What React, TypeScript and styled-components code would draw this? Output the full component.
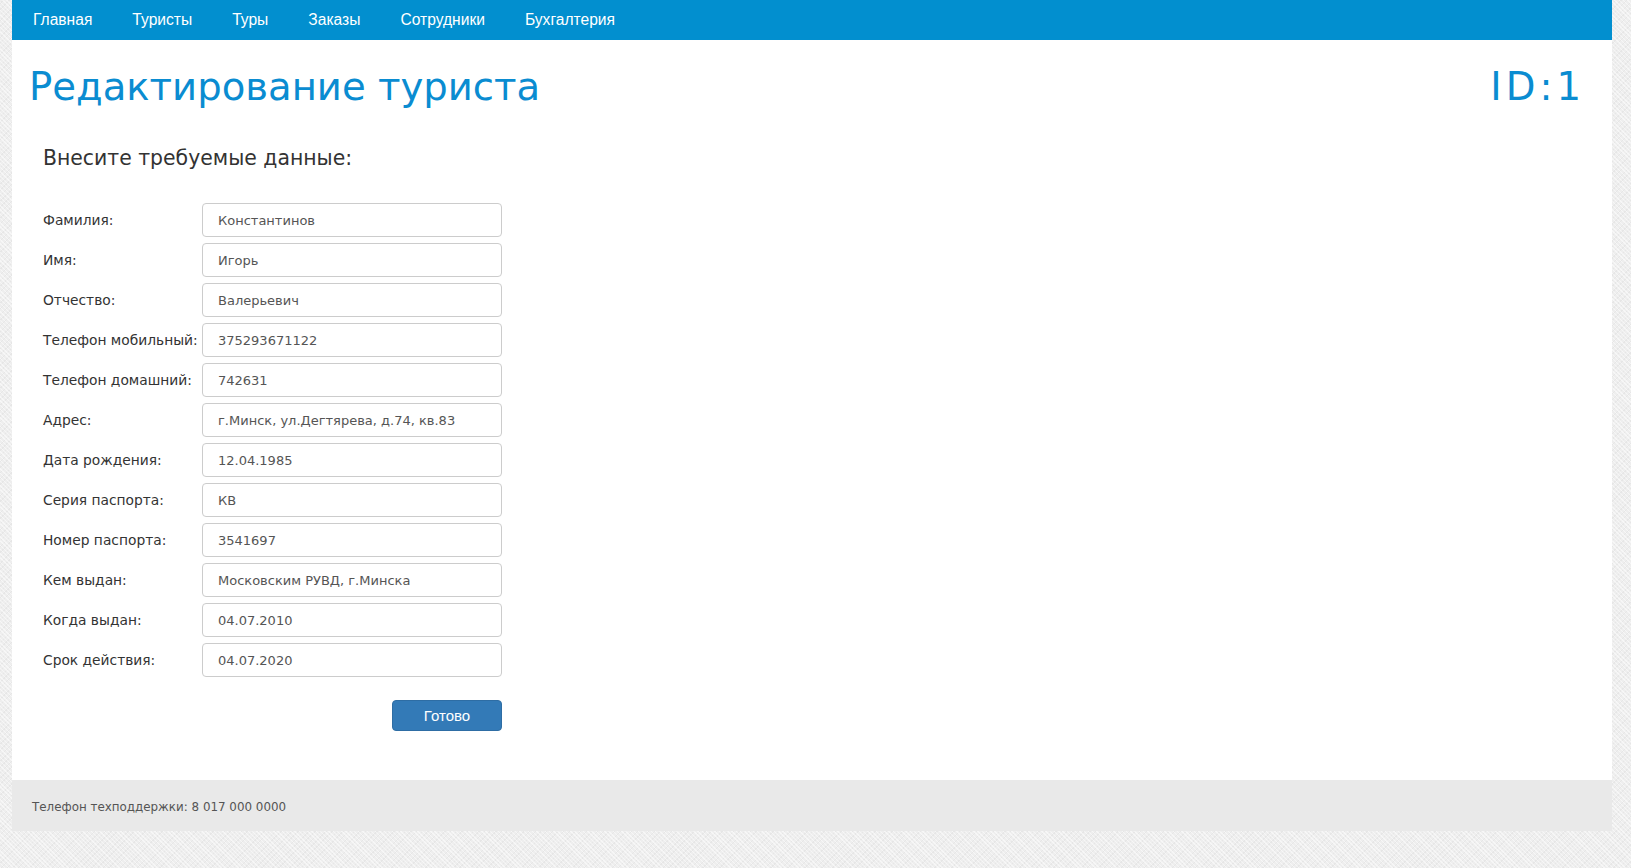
import React from "react";
import styled, { createGlobalStyle } from "styled-components";

const GlobalStyle = createGlobalStyle`
  html, body {
    margin: 0;
    padding: 0;
  }
  body {
    min-height: 868px;
    background-color: #eeeeee;
    background-image:
      repeating-linear-gradient(45deg, rgba(255,255,255,0.5) 0px, rgba(255,255,255,0.5) 1px, transparent 1px, transparent 3px),
      repeating-linear-gradient(-45deg, rgba(0,0,0,0.035) 0px, rgba(0,0,0,0.035) 1px, transparent 1px, transparent 4px);
    font-family: "DejaVu Sans", Verdana, sans-serif;
  }
`;

const Page = styled.div`
  width: 1600px;
  margin-left: 12px;
`;

const Nav = styled.nav`
  display: flex;
  height: 40px;
  background: #028fcf;
  padding-left: 1px;
`;

const NavItem = styled.a`
  padding: 0 20px;
  line-height: 39px;
  color: #ffffff;
  font-family: "Liberation Sans", Arial, sans-serif;
  font-size: 15.6px;
  text-decoration: none;
`;

const Panel = styled.main`
  background: #ffffff;
  padding: 23px 31px 49px 17px;
`;

const Header = styled.div`
  display: flex;
  justify-content: space-between;
  align-items: flex-start;
`;

const Title = styled.h1`
  margin: 0;
  font-weight: normal;
  font-size: 38.6px;
  line-height: 48px;
  color: #0a8cd1;
`;

const IdTitle = styled(Title)`
  letter-spacing: 4px;
  margin-right: -4px;
`;

const Form = styled.form`
  padding-left: 14px;
  width: 471px;
  margin-top: 35px;
`;

const Subtitle = styled.h2`
  margin: 0 0 33px;
  font-weight: normal;
  font-size: 20.4px;
  line-height: 24px;
  color: #333333;
`;

const Rows = styled.div`
  display: flex;
  flex-direction: column;
  gap: 6px;
`;

const Row = styled.label`
  display: grid;
  grid-template-columns: 159px 300px;
  align-items: center;
`;

const Label = styled.span`
  font-size: 13.8px;
  color: #333333;
  white-space: nowrap;
`;

const Input = styled.input`
  box-sizing: border-box;
  width: 300px;
  height: 34px;
  padding: 0 15px;
  border: 1px solid #cccccc;
  border-radius: 4px;
  font-family: "DejaVu Sans", Verdana, sans-serif;
  font-size: 13px;
  color: #555555;
  background: #ffffff;
  outline: none;
`;

const Actions = styled.div`
  display: flex;
  justify-content: flex-end;
  width: 459px;
  margin-top: 23px;
`;

const Button = styled.button`
  width: 110px;
  height: 31px;
  border: 1px solid #2e6da4;
  border-radius: 4px;
  background: #337ab7;
  color: #ffffff;
  font-family: "Liberation Sans", Arial, sans-serif;
  font-size: 15px;
  cursor: pointer;
`;

const Footer = styled.footer`
  height: 51px;
  display: flex;
  align-items: center;
  padding-left: 20px;
  padding-top: 2px;
  box-sizing: border-box;
  background: #e9e9e9;
  font-size: 11.9px;
  color: #555555;
`;

const navItems = ["Главная", "Туристы", "Туры", "Заказы", "Сотрудники", "Бухгалтерия"];

const fields: [string, string][] = [
  ["Фамилия:", "Константинов"],
  ["Имя:", "Игорь"],
  ["Отчество:", "Валерьевич"],
  ["Телефон мобильный:", "375293671122"],
  ["Телефон домашний:", "742631"],
  ["Адрес:", "г.Минск, ул.Дегтярева, д.74, кв.83"],
  ["Дата рождения:", "12.04.1985"],
  ["Серия паспорта:", "КВ"],
  ["Номер паспорта:", "3541697"],
  ["Кем выдан:", "Московским РУВД, г.Минска"],
  ["Когда выдан:", "04.07.2010"],
  ["Срок действия:", "04.07.2020"],
];

export default function App() {
  return (
    <>
      <GlobalStyle />
      <Page>
        <Nav>
          {navItems.map((item) => (
            <NavItem key={item} href="#">
              {item}
            </NavItem>
          ))}
        </Nav>
        <Panel>
          <Header>
            <Title>Редактирование туриста</Title>
            <IdTitle>ID:1</IdTitle>
          </Header>
          <Form onSubmit={(e) => e.preventDefault()}>
            <Subtitle>Внесите требуемые данные:</Subtitle>
            <Rows>
              {fields.map(([label, value]) => (
                <Row key={label}>
                  <Label>{label}</Label>
                  <Input defaultValue={value} />
                </Row>
              ))}
            </Rows>
            <Actions>
              <Button type="submit">Готово</Button>
            </Actions>
          </Form>
        </Panel>
        <Footer>Телефон техподдержки: 8 017 000 0000</Footer>
      </Page>
    </>
  );
}
